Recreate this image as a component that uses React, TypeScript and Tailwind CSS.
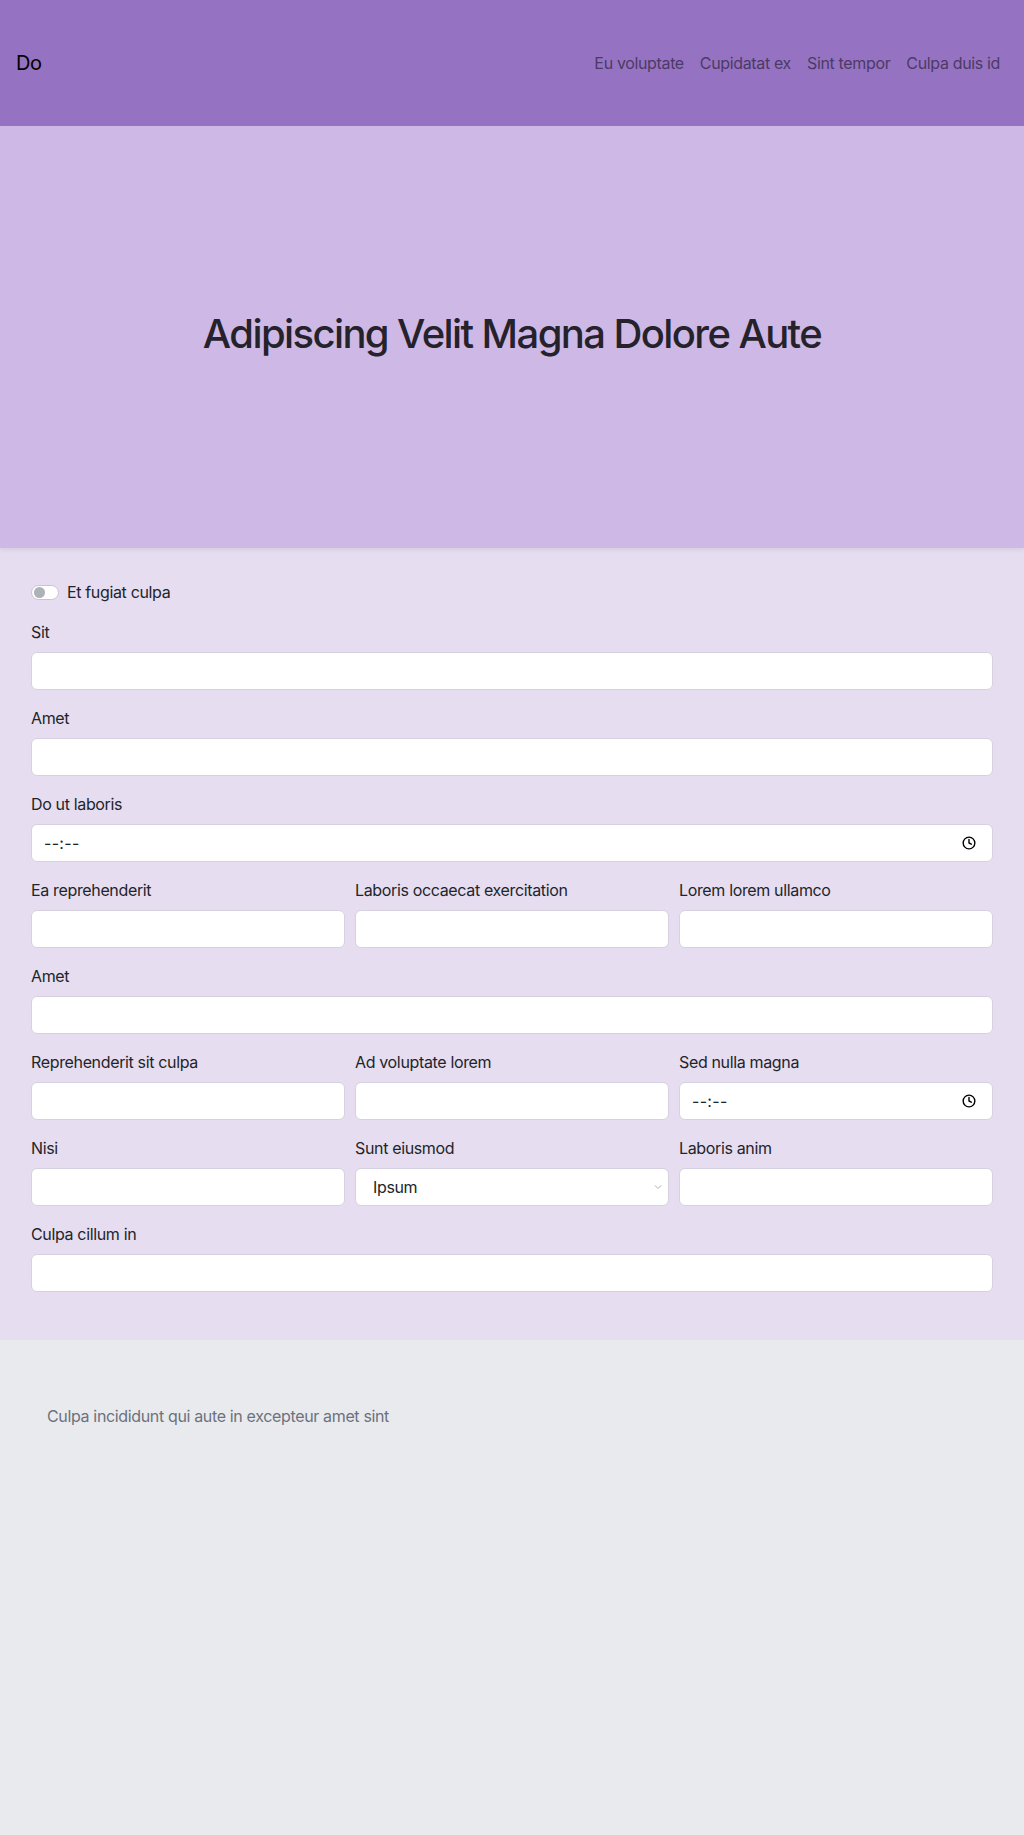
import React from 'react';
import { Clock, ChevronDown } from 'lucide-react';

const font = "font-['Inter','Liberation_Sans',sans-serif] tracking-[-0.35px]";

const TextField = ({ label }: { label: string }) => (
  <div className="mb-4">
    <label className="block text-[16px] leading-6 mb-2 text-[#212529]">{label}</label>
    <input
      type="text"
      className="block w-full h-[38px] rounded-[6px] border border-[#d6d1de] bg-white px-3 text-[16px] outline-none"
    />
  </div>
);

const TimeField = ({ label }: { label: string }) => (
  <div className="mb-4">
    <label className="block text-[16px] leading-6 mb-2 text-[#212529]">{label}</label>
    <div className="flex items-center justify-between w-full h-[38px] rounded-[6px] border border-[#d6d1de] bg-white pl-3 pr-[16px]">
      <span className="text-[16px] text-[#212529] tracking-[0.3px]">--:--</span>
      <Clock size={14} strokeWidth={2.4} className="text-black" />
    </div>
  </div>
);

const SelectField = ({ label }: { label: string }) => (
  <div className="mb-4">
    <label className="block text-[16px] leading-6 mb-2 text-[#212529]">{label}</label>
    <div className="relative">
      <select
        defaultValue="ipsum"
        className="block w-full h-[38px] appearance-none rounded-[6px] border border-[#d6d1de] bg-white pl-[17px] pr-8 text-[16px] text-[#212529] tracking-[-0.35px] outline-none"
      >
        <option value="ipsum">Ipsum</option>
        <option value="dolor">Dolor</option>
      </select>
      <ChevronDown size={12} strokeWidth={1.5} className="absolute right-[5px] top-[13px] text-[#9a9aa2] pointer-events-none" />
    </div>
  </div>
);

const App = () => {
  return (
    <div className={`${font} min-h-[1835px] bg-[#e9eaee] text-[#212529]`}>
      {/* Navbar */}
      <header className="h-[126px] bg-[#9673c2] flex items-center justify-between pl-4 pr-4">
        <span className="text-[20px] leading-7 text-black">Do</span>
        <nav className="flex items-center">
          {['Eu voluptate', 'Cupidatat ex', 'Sint tempor', 'Culpa duis id'].map(l => (
            <a key={l} href="#" className="px-2 text-[16px] leading-6 text-[#4b3a66]">
              {l}
            </a>
          ))}
        </nav>
      </header>

      {/* Hero */}
      <section className="relative z-10 h-[422px] bg-[#ceb8e6] flex items-center justify-center shadow-[0_2px_4px_rgba(0,0,0,0.08)]">
        <h1 className="text-[40px] leading-[48px] font-medium tracking-[-1.6px] text-[#25222b] -mt-[6px]">
          Adipiscing Velit Magna Dolore Aute
        </h1>
      </section>

      {/* Form */}
      <section className="bg-[#e7ddf1] px-[31px] pt-8 pb-8">
        <div className="flex items-center gap-2 mb-4 h-6">
          <div className="w-[28px] h-[15px] rounded-full border border-[#c9c3d1] bg-white flex items-center px-[2px]">
            <div className="w-[11px] h-[11px] rounded-full bg-[#adb1b8]" />
          </div>
          <span className="text-[16px] leading-6">Et fugiat culpa</span>
        </div>

        <TextField label="Sit" />
        <TextField label="Amet" />
        <TimeField label="Do ut laboris" />

        <div className="grid grid-cols-3 gap-x-[10px]">
          <TextField label="Ea reprehenderit" />
          <TextField label="Laboris occaecat exercitation" />
          <TextField label="Lorem lorem ullamco" />
        </div>

        <TextField label="Amet" />

        <div className="grid grid-cols-3 gap-x-[10px]">
          <TextField label="Reprehenderit sit culpa" />
          <TextField label="Ad voluptate lorem" />
          <TimeField label="Sed nulla magna" />
        </div>

        <div className="grid grid-cols-3 gap-x-[10px]">
          <TextField label="Nisi" />
          <SelectField label="Sunt eiusmod" />
          <TextField label="Laboris anim" />
        </div>

        <TextField label="Culpa cillum in" />
      </section>

      {/* Footer */}
      <footer className="bg-[#e9eaee] rounded-t-[5px] px-[47px] pt-16 pb-16">
        <p className="text-[16px] leading-6 text-[#6c727c]">Culpa incididunt qui aute in excepteur amet sint</p>
      </footer>
    </div>
  );
};

export default App;
